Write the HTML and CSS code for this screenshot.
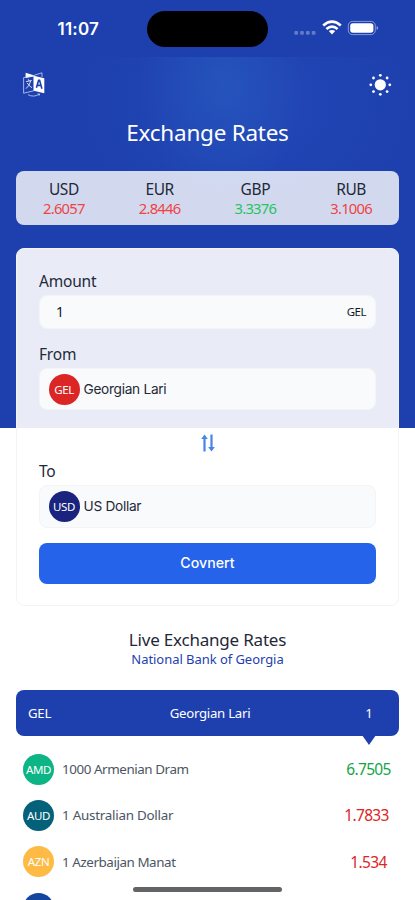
FILE: index.html
```html
<!DOCTYPE html>
<html lang="en">
<head>
<meta charset="utf-8">
<meta name="viewport" content="width=device-width, initial-scale=1">
<title>Exchange Rates</title>
<link rel="stylesheet" href="styles.css">
</head>
<body>
<div class="screen">
  <div class="status">
    <span class="clock">11:07</span>
    <span class="island"></span>
    <svg class="signals" width="86" height="20" viewBox="0 0 86 20">
      <g fill="#fff" opacity=".3"><rect x="1.3" y="12" width="3.8" height="3.8" rx="1"/><rect x="7.1" y="12" width="3.8" height="3.8" rx="1"/><rect x="12.9" y="12" width="3.8" height="3.8" rx="1"/><rect x="18.7" y="12" width="3.8" height="3.8" rx="1"/></g>
      <g fill="none" stroke="#fff" stroke-width="2.7"><path d="M30.2 6.5Q39-1.2 47.8 6.5"/><path d="M33.4 10Q39 5.2 44.6 10"/></g>
      <path d="M35.8 12.1Q39 9.7 42.2 12.1L39 15.5z" fill="#fff"/>
      <rect x="55.3" y="2.4" width="27" height="13.2" rx="4.2" fill="none" stroke="#fff" stroke-opacity=".45"/>
      <rect x="57.2" y="4.3" width="23.2" height="9.4" rx="2.7" fill="#fff"/>
      <path d="M83.6 7q1.6.5 1.6 2t-1.6 2z" fill="#fff" opacity=".5"/>
    </svg>
  </div>
  <header class="hero">
    <div class="tools">
      <svg width="22" height="26" viewBox="0 0 22 26">
        <path d="M2.6.8L10.7 3.3 10.7 4.6 2.6 6z" fill="#fff"/>
        <path d="M10.5 3.5L19 .8V5M.6 5.6L10.8 3.8V18.8L.6 21.2zM5 22.7Q10.5 25.7 16.4 22.2M14.6 21.8L16.6 22 16.1 23.7" fill="none" stroke="#dbe5ff" stroke-width=".7"/>
        <path d="M10.8 3.8L21.3 6.2V21.2L10.8 18.8z" fill="#fff"/>
        <path d="M13.4 15.8L15.6 8.4H16.6L18.9 16.8M14.2 13.4H17.8" fill="none" stroke="#1e40af" stroke-width="1.6"/>
        <path d="M3 9.7L8.7 8.5M5.2 7.2L6.2 9M7.8 8.7Q6.3 14.3 3 16.6M4.2 11Q6.5 14.4 9 15.7" fill="none" stroke="#fff" stroke-width=".8"/>
      </svg>
      <svg width="24" height="24" viewBox="0 0 24 24" fill="#fff">
        <circle cx="12.3" cy="11.8" r="5.6"/>
        <circle cx="12.3" cy="2.3" r="1.4"/><circle cx="12.3" cy="21.3" r="1.4"/><circle cx="2.8" cy="11.8" r="1.4"/><circle cx="21.8" cy="11.8" r="1.4"/>
        <circle cx="5.5" cy="5" r="1.4"/><circle cx="19.1" cy="5" r="1.4"/><circle cx="5.5" cy="18.6" r="1.4"/><circle cx="19.1" cy="18.6" r="1.4"/>
      </svg>
    </div>
    <h1>Exchange Rates</h1>
    <div class="quotes">
      <div><b>USD</b><span class="down">2.6057</span></div>
      <div><b>EUR</b><span class="down">2.8446</span></div>
      <div><b>GBP</b><span class="up">3.3376</span></div>
      <div><b>RUB</b><span class="down">3.1006</span></div>
    </div>
  </header>
  <main>
    <section class="converter">
      <div class="label">Amount</div>
      <div class="field amount"><span>1</span><small>GEL</small></div>
      <div class="label from">From</div>
      <div class="field currency"><i class="coin gel">GEL</i><span>Georgian Lari</span></div>
      <div class="swap">
        <svg width="14" height="18" viewBox="0 0 14 18" fill="#4785e8"><path d="M2.4 17.5V5H.2L3.5.4 6.8 5H4.6V17.5zM9.4.5V13H7.2L10.5 17.6 13.8 13H11.6V.5z"/></svg>
      </div>
      <div class="label">To</div>
      <div class="field currency to"><i class="coin usd">USD</i><span>US Dollar</span></div>
      <button class="convert">Covnert</button>
    </section>
    <h2>Live Exchange Rates</h2>
    <p class="source">National Bank of Georgia</p>
    <div class="base"><span>GEL</span><span class="base-name">Georgian Lari</span><span class="base-unit">1</span></div>
    <div class="rows">
      <div class="row"><i class="coin amd">AMD</i><span class="name">1000 Armenian Dram</span><span class="rate gain">6.7505</span></div>
      <div class="row"><i class="coin aud">AUD</i><span class="name wide">1 Australian Dollar</span><span class="rate mid loss">1.7833</span></div>
      <div class="row"><i class="coin azn">AZN</i><span class="name">1 Azerbaijan Manat</span><span class="rate loss">1.534</span></div>
      <div class="row"><i class="coin bgn"></i></div>
    </div>
  </main>
  <div class="home-bar"></div>
</div>
</body>
</html>
```
FILE: styles.css
```css
* { box-sizing: border-box; }
body { margin: 0; font-family: "Noto Sans", sans-serif; color: #1f2937; }
.screen {
  position: relative;
  height: 900px;
  overflow: hidden;
  background: linear-gradient(#1e40af 0 428px, #fff 428px);
}
svg { display: block; }
.status { height: 57px; display: flex; }
.clock { margin: 19px 0 0 57.5px; width: 89.5px; font: 600 17px/20px Inter, sans-serif; letter-spacing: .2px; color: #fff; }
.island { width: 121px; height: 36px; margin-top: 11px; border-radius: 18px; background: #000; }
.signals { margin: 19px 0 0 25px; }
.hero {
  height: 191px;
  padding: 15px 16px 0;
  background:
    radial-gradient(ellipse 85px 115px at 222px 26px, rgba(40, 100, 195, .45), transparent),
    radial-gradient(ellipse 170px 130px at 245px 45px, rgba(42, 82, 195, .4), transparent);
}
.tools { display: flex; justify-content: space-between; align-items: center; height: 26px; padding: 0 7px; }
h1 { margin: 19px 0 0; font-weight: 400; font-size: 22.5px; line-height: 32px; letter-spacing: -.25px; text-align: center; color: #fff; }
.quotes { display: grid; grid-template-columns: repeat(4, 1fr); height: 54px; margin-top: 22px; padding-top: 8px; border-radius: 8px; background: rgba(255, 255, 255, .8); text-align: center; }
.quotes b, .quotes span { display: block; font-weight: 400; line-height: 20px; }
.quotes span { margin-top: -1px; font-size: 14.8px; letter-spacing: -.75px; }
.quotes b { font-size: 15.5px; letter-spacing: -.4px; }
.down { color: #ef4444; }
.up { color: #22c55e; }
main { padding: 0 16px; }
.converter { height: 358px; padding: 21px 22px 0; border: 1px solid #f3f4f6; border-radius: 8px; background: rgba(255, 255, 255, .9); }
.label { font-size: 15.5px; line-height: 22px; letter-spacing: -.2px; }
.from { margin-top: 14px; }
.field { display: flex; align-items: center; border: 1px solid #f3f4f6; border-radius: 8px; background: #f9fafb; color: #111827; }
.amount { height: 34px; margin-top: 3px; padding: 0 9px 1px 16px; justify-content: space-between; font-size: 14px; }
.amount small { font-size: 11.5px; letter-spacing: -.5px; }
.currency { height: 42px; margin-top: 3px; padding: 0 0 0 8.5px; gap: 4px; font: 13.7px Inter, sans-serif; letter-spacing: -.3px; color: #1f2937; }
.to { height: 43px; padding-bottom: 1px; }
.coin { display: flex; align-items: center; justify-content: center; flex: none; width: 31px; height: 31px; border-radius: 50%; font: 400 11.5px "Noto Sans", sans-serif; letter-spacing: -.4px; color: #fff; }
.gel { background: #dc2626; }
.usd { background: #1a237e; }
.amd { background: #0db485; }
.aud { background: #05607a; }
.azn { background: #fdbb45; }
.bgn { background: #1446a0; }
.swap { display: flex; justify-content: center; margin: 24px 0 8px; }
.convert { display: block; width: 100%; height: 41px; margin-top: 15px; padding: 0 0 2px; border: 0; border-radius: 8px; background: #2563eb; color: #fff; font: 500 14.2px Inter, sans-serif; }
h2 { margin: 21.5px 0 0; font-weight: 400; font-size: 17px; line-height: 23px; letter-spacing: -.2px; text-align: center; }
.source { margin: 0; font-size: 13px; line-height: 16px; letter-spacing: -.05px; text-align: center; color: #1e40af; }
.base { position: relative; display: grid; grid-template-columns: 53px 1fr 60px; align-items: center; height: 46px; margin-top: 23.5px; padding-left: 12px; border-radius: 8px; background: #1e40af; color: #fff; font-size: 13.2px; letter-spacing: -.25px; }
.base-name, .base-unit { text-align: center; }
.base::after { content: ""; position: absolute; right: 23px; top: 45px; border: 7.5px solid transparent; border-top: 10px solid #1e40af; border-bottom: 0; }
.rows { padding: 10px 0 0 7px; }
.row { display: flex; align-items: center; height: 46.3px; }
.name { margin-left: 8px; flex: 1; font-size: 13.4px; letter-spacing: -.43px; color: #4b5563; }
.wide { letter-spacing: -.25px; }
.rate { width: 61px; text-align: center; font-size: 15.5px; letter-spacing: -.65px; }
.mid { padding-right: 4px; }
.gain { color: #16a34a; }
.loss { color: #dc2626; }
.home-bar { position: absolute; left: 133px; top: 887px; width: 149px; height: 5px; border-radius: 3px; background: #626466; }
```
